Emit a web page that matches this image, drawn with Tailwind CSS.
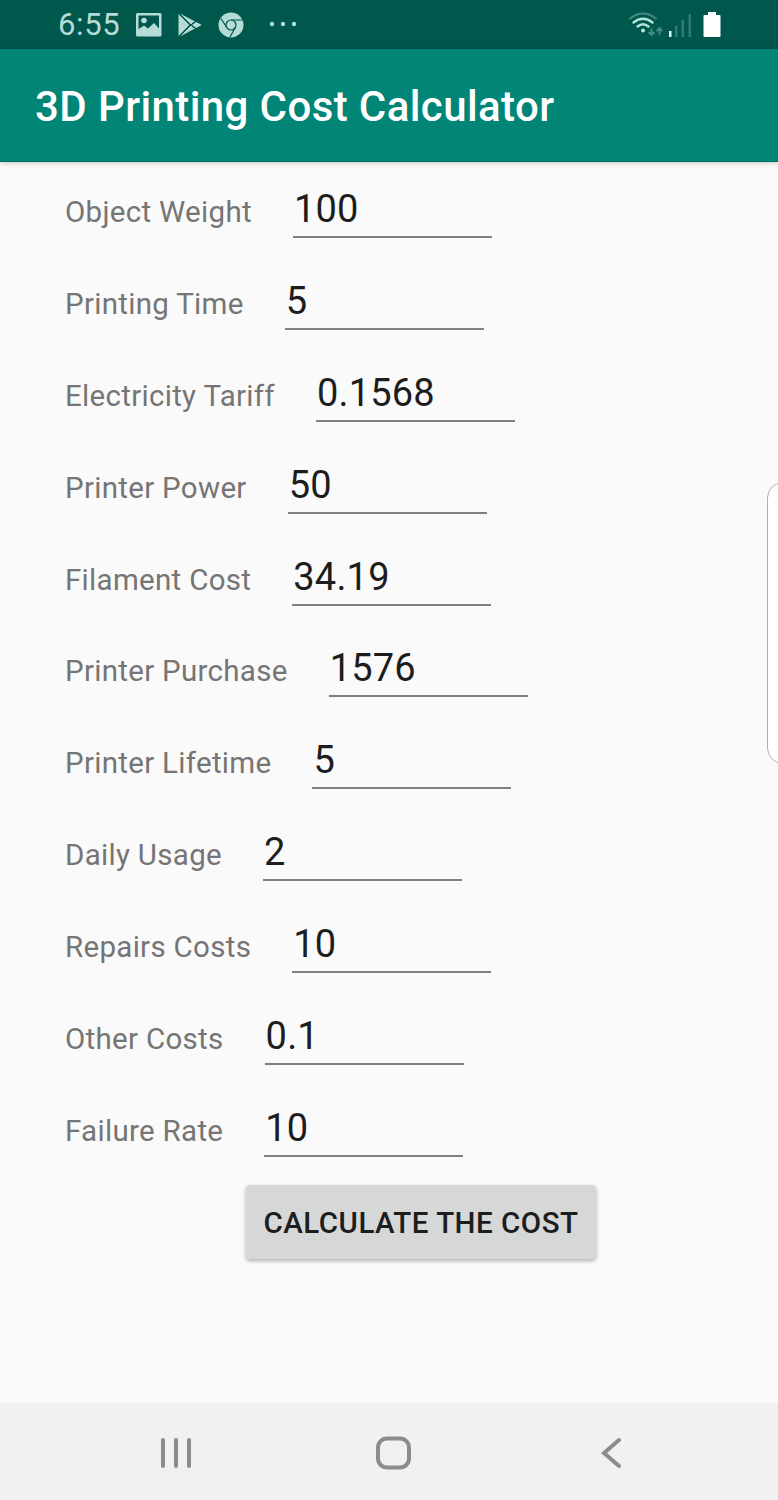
<!DOCTYPE html>
<html lang="en">
<head>
  <meta charset="UTF-8">
  <meta name="viewport" content="width=device-width, initial-scale=1.0">
  <title>3D Printing Cost Calculator</title>
  <script src="https://cdn.jsdelivr.net/npm/@tailwindcss/browser@4"></script>
</head>
<body class="bg-[#fafafa] font-['Roboto',sans-serif]">
  <div class="relative flex h-[1500px] w-[778px] flex-col overflow-hidden">
    <!-- Status bar -->
    <div class="flex h-[49px] shrink-0 items-center bg-[#00574b] pl-[58px] pr-[57px] text-[#b5dcd6]">
      <span class="w-[78px] text-[31px] leading-none tracking-[0.6px]">6:55</span>
      <svg class="h-6 w-[26px]" viewBox="0 0 26 24" fill="currentColor">
        <path fill-rule="evenodd" d="M1.500 0h22.500a1.500 1.500 0 0 1 1.500 1.500v20.500a1.500 1.500 0 0 1-1.500 1.500H1.500A1.500 1.500 0 0 1 0 22V1.500A1.500 1.500 0 0 1 1.500 0zM2.500 2.500v13.500l5.500-3.500 4 3 6-5.500 5 5.500V2.500z"/>
        <circle cx="8" cy="7.500" r="2.800"/>
      </svg>
      <svg class="ml-4 h-6 w-6" viewBox="0 0 24 24" fill="currentColor">
        <path d="M.5 1v22L11.300 12z"/>
        <path d="M2 .5l15 8-4 3.300zM2 23.500l15-8-4-3.300zM18.200 9l5.500 3-5.500 3-4.200-3z"/>
        <path d="M1 .5l15 14.500M1 23.500L16 9" fill="none" stroke="#00574b" stroke-width="1"/>
      </svg>
      <svg class="ml-4 h-[26px] w-[26px]" viewBox="0 0 26 26">
        <circle cx="13" cy="13" r="12.500" fill="currentColor"/>
        <circle cx="13" cy="13" r="5" fill="none" stroke="#00574b" stroke-width="1.200"/>
        <path d="M13 8h11.500M8.700 15.500L3 6.500M17.300 15.500L12 25" fill="none" stroke="#00574b" stroke-width="1.200"/>
      </svg>
      <svg class="ml-[25px] h-6 w-[28px]" viewBox="0 0 28 24" fill="currentColor">
        <circle cx="3" cy="11" r="2.200"/>
        <circle cx="14" cy="11" r="2.200"/>
        <circle cx="25" cy="11" r="2.200"/>
      </svg>
      <svg class="ml-auto h-7 w-[36px]" viewBox="0 0 36 28" fill="none" stroke-linecap="round">
        <path d="M2 7.500Q15-2.500 28 7.500" stroke="#458c81" stroke-width="2"/>
        <path d="M5.500 11.500Q15 4 24.500 11.500M9.500 15.500Q15 11 20.500 15.500" stroke="#b5e5dc" stroke-width="2.400"/>
        <circle cx="15" cy="19.500" r="2" fill="#b5e5dc"/>
        <path d="M23.500 18v6M21 21.500l2.500 2.500 2.500-2.500M31.500 23v-6M29 19.500l2.500-2.500 2.500 2.500" stroke="#458c81" stroke-width="1.800"/>
      </svg>
      <svg class="ml-[5px] h-6 w-[24px]" viewBox="0 0 24 24">
        <path d="M0 18h2.500v6H0z" fill="#d5fff5"/>
        <path d="M6 13h2.500v11H6zM12.500 7H15v17h-2.500zM19.500 1H22v23h-2.500z" fill="#347c70"/>
      </svg>
      <svg class="ml-[10px] h-[25px] w-[18px]" viewBox="0 0 18 25">
        <path d="M5 0h8v3h3.500a1 1 0 0 1 1 1v20a1 1 0 0 1-1 1h-15a1 1 0 0 1-1-1V4a1 1 0 0 1 1-1H5z" fill="#fff"/>
      </svg>
    </div>

    <!-- App bar -->
    <header class="flex h-[113px] shrink-0 items-center border-b border-[#006b5e] bg-[#008577] pl-[35px] shadow-[0_1px_5px_rgba(0,0,0,0.2)]">
      <h1 class="mt-1 text-[42px] font-medium leading-[48px] tracking-[0.4px] text-white">3D Printing Cost Calculator</h1>
    </header>

    <!-- Input rows -->
    <main class="flex flex-col pl-[65px] pt-[27px] text-[#1d1d1d]">
      <label class="flex h-[91.9px] items-baseline">
        <span class="text-[29.5px] tracking-[0.3px] text-[#757575]">Object Weight</span>
        <input type="text" value="100" class="ml-[41px] h-[49px] w-[199px] border-b-2 border-[#808080] pb-[7px] pl-px text-[38px] leading-[42px] tracking-[0.2px] outline-none">
      </label>
      <label class="flex h-[91.9px] items-baseline">
        <span class="text-[29.5px] tracking-[0.3px] text-[#757575]">Printing Time</span>
        <input type="text" value="5" class="ml-[41px] h-[49px] w-[199px] border-b-2 border-[#808080] pb-[7px] pl-px text-[38px] leading-[42px] tracking-[0.2px] outline-none">
      </label>
      <label class="flex h-[91.9px] items-baseline">
        <span class="text-[29.5px] tracking-[0.3px] text-[#757575]">Electricity Tariff</span>
        <input type="text" value="0.1568" class="ml-[41px] h-[49px] w-[199px] border-b-2 border-[#808080] pb-[7px] pl-px text-[38px] leading-[42px] tracking-[0.2px] outline-none">
      </label>
      <label class="flex h-[91.9px] items-baseline">
        <span class="text-[29.5px] tracking-[0.3px] text-[#757575]">Printer Power</span>
        <input type="text" value="50" class="ml-[41px] h-[49px] w-[199px] border-b-2 border-[#808080] pb-[7px] pl-px text-[38px] leading-[42px] tracking-[0.2px] outline-none">
      </label>
      <label class="flex h-[91.9px] items-baseline">
        <span class="text-[29.5px] tracking-[0.3px] text-[#757575]">Filament Cost</span>
        <input type="text" value="34.19" class="ml-[41px] h-[49px] w-[199px] border-b-2 border-[#808080] pb-[7px] pl-px text-[38px] leading-[42px] tracking-[0.2px] outline-none">
      </label>
      <label class="flex h-[91.9px] items-baseline">
        <span class="text-[29.5px] tracking-[0.3px] text-[#757575]">Printer Purchase</span>
        <input type="text" value="1576" class="ml-[41px] h-[49px] w-[199px] border-b-2 border-[#808080] pb-[7px] pl-px text-[38px] leading-[42px] tracking-[0.2px] outline-none">
      </label>
      <label class="flex h-[91.9px] items-baseline">
        <span class="text-[29.5px] tracking-[0.3px] text-[#757575]">Printer Lifetime</span>
        <input type="text" value="5" class="ml-[41px] h-[49px] w-[199px] border-b-2 border-[#808080] pb-[7px] pl-px text-[38px] leading-[42px] tracking-[0.2px] outline-none">
      </label>
      <label class="flex h-[91.9px] items-baseline">
        <span class="text-[29.5px] tracking-[0.3px] text-[#757575]">Daily Usage</span>
        <input type="text" value="2" class="ml-[41px] h-[49px] w-[199px] border-b-2 border-[#808080] pb-[7px] pl-px text-[38px] leading-[42px] tracking-[0.2px] outline-none">
      </label>
      <label class="flex h-[91.9px] items-baseline">
        <span class="text-[29.5px] tracking-[0.3px] text-[#757575]">Repairs Costs</span>
        <input type="text" value="10" class="ml-[41px] h-[49px] w-[199px] border-b-2 border-[#808080] pb-[7px] pl-px text-[38px] leading-[42px] tracking-[0.2px] outline-none">
      </label>
      <label class="flex h-[91.9px] items-baseline">
        <span class="text-[29.5px] tracking-[0.3px] text-[#757575]">Other Costs</span>
        <input type="text" value="0.1" class="ml-[41px] h-[49px] w-[199px] border-b-2 border-[#808080] pb-[7px] pl-px text-[38px] leading-[42px] tracking-[0.2px] outline-none">
      </label>
      <label class="flex h-[77px] items-baseline">
        <span class="text-[29.5px] tracking-[0.3px] text-[#757575]">Failure Rate</span>
        <input type="text" value="10" class="ml-[41px] h-[49px] w-[199px] border-b-2 border-[#808080] pb-[7px] pl-px text-[38px] leading-[42px] tracking-[0.2px] outline-none">
      </label>
      <button type="button" class="ml-[181px] h-[74px] w-[350px] whitespace-nowrap rounded-[4px] bg-[#d6d7d7] pt-[2px] text-[29.5px] font-medium tracking-[0.5px] shadow-[0_2px_4px_rgba(0,0,0,0.3)]">CALCULATE THE COST</button>
    </main>

    <!-- Edge panel handle -->
    <div class="absolute left-[767px] top-[482px] h-[282px] w-[40px] rounded-[16px] border border-[#b0b0b0] bg-white"></div>

    <!-- Navigation bar -->
    <nav class="mt-auto flex h-[97px] shrink-0 items-center bg-[#f1f1f1] pl-[160px] pt-[3px] text-[#8c8c8c]">
      <svg class="h-8 w-8" viewBox="0 0 32 32" fill="none" stroke="currentColor" stroke-width="4" stroke-linecap="round">
        <path d="M3 3v26M16 3v26M29 3v26"/>
      </svg>
      <svg class="ml-[183px] h-9 w-9" viewBox="0 0 36 36" fill="none" stroke="currentColor" stroke-width="4">
        <rect x="3" y="3.500" width="31" height="29" rx="9"/>
      </svg>
      <svg class="ml-[190px] h-8 w-5" viewBox="0 0 20 32" fill="none" stroke="currentColor" stroke-width="4" stroke-linecap="round">
        <path d="M18 3L3 16 18 29"/>
      </svg>
    </nav>
  </div>
</body>
</html>
